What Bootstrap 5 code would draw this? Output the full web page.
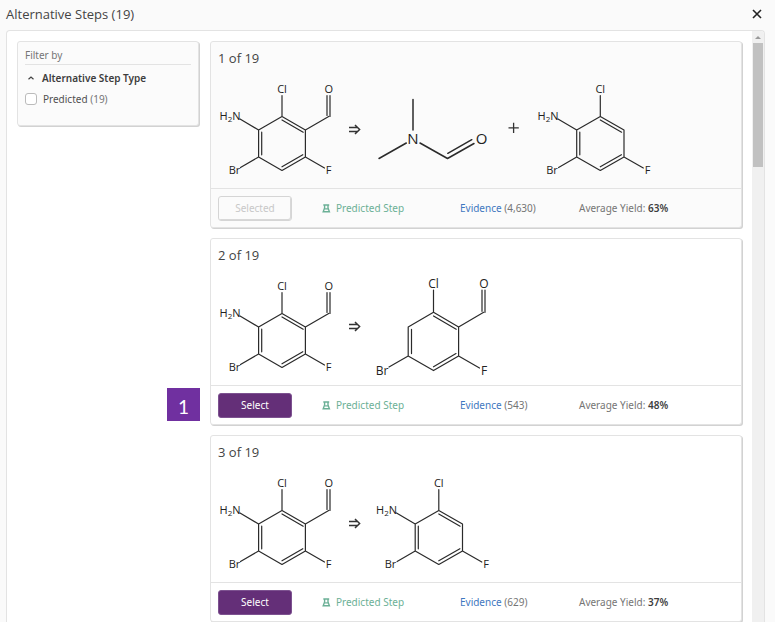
<!DOCTYPE html>
<html lang="en">
<head>
<meta charset="utf-8">
<meta name="viewport" content="width=device-width, initial-scale=1">
<title>Alternative Steps</title>
<link href="https://cdn.jsdelivr.net/npm/bootstrap@5.3.0/dist/css/bootstrap.min.css" rel="stylesheet">
<style>
  body { font-family: "Noto Sans", "Open Sans", sans-serif; font-size: 10px; line-height: 16px; color: #757575; background: #fafafa; }
  .dialog-head { height: 30px; padding: 0 12px 2px 6px; }
  .dialog-title { font-family: "Open Sans", sans-serif; font-size: 13px; line-height: 20px; color: #444; }
  .close-btn { width: 12px; height: 12px; line-height: 0; }
  .panel { margin: 0 10px 0 6px; border: 1px solid #e3e3e3; border-bottom: 0; border-radius: 4px 4px 0 0; background: #fff; min-height: 0; }
  .panel-body { padding: 10px 10px 0; gap: 11px; min-width: 0; }
  .box { border: 1px solid #e3e3e3; border-radius: 3px; box-shadow: 1px 1px 0 #d2d2d2; background: #fff; }
  .box-tint { background: #fbfbfb; }
  .filter { width: 182px; height: 85px; padding: 5px 7px; }
  .filter-label { border-bottom: 1px solid #e3e3e3; padding-bottom: 1px; }
  .filter-group { gap: 7px; padding: 5px 2px; color: #3d3d3d; }
  .filter .form-check-input { width: 12px; height: 12px; border-color: #bbb; border-radius: 3px; }
  .filter-option { gap: 6px; }
  .filter-option label { color: #505050; }
  .filter-option small { font-size: 10px; color: #757575; }
  .steps { gap: 10px; min-width: 0; }
  .step-title { font-family: "Open Sans", sans-serif; font-size: 13px; line-height: 32px; color: #444; padding: 0 7px; }
  .reaction { padding: 8px 7px 10px; }
  .reaction svg { flex: none; overflow: visible; }
  .step-foot { display: grid; grid-template-columns: 104fr 138fr 119fr 155fr; align-items: center; height: 39px; padding: 0 7px; border-top: 1px solid #e3e3e3; }
  .step-btn { width: 74px; height: 25px; padding: 0; font-size: 10px; line-height: 16px; border-radius: 3px; }
  .step-btn.pick { color: #fff; background: #642f78; border: 1px solid #7d5290; }
  .step-btn.picked, .step-btn.picked:disabled { color: #c8c8c8; background: #fbfbfb; border: 1px solid #d5d5d5; box-shadow: inset -1px -1px 0 #d8d8d8; opacity: 1; }
  .predicted { color: #6bb096; gap: 5px; }
  .evidence { color: #3f78c0; }
  .yield { color: #3d3d3d; font-weight: 600; }
  .callout-no { left: -44px; top: 149px; width: 33px; height: 33px; background: #7030a0; color: #fff; font: 19px/37px Lato, sans-serif; }
  .scroll-track { width: 12px; background: #f0f0f0; }
  .scroll-up { height: 12px; }
  .scroll-thumb { height: 124px; margin: 0 1px; background: #c1c1c1; }
  .bonds { fill: none; stroke: #2b2b2b; stroke-width: 1.2; stroke-linecap: round; stroke-linejoin: round; }
  .bonds-lg { stroke-width: 1.5; }
  .atoms { fill: #222; font-family: "Open Sans", sans-serif; font-size: 11px; }
  .atoms-md { font-size: 12px; }
  .atoms-lg { font-size: 15px; }
  .sub { font-size: 8px; }
</style>
<script src="https://cdn.jsdelivr.net/npm/bootstrap@5.3.0/dist/js/bootstrap.bundle.min.js"></script>
</head>
<body class="vh-100 d-flex flex-column overflow-hidden">

<svg class="d-none" aria-hidden="true">
  <defs>
    <g id="aldehyde">
      <path class="bonds" d="M282 116.5 305.4 130V157L282 170.5 258.6 157V130ZM282 120 303.2 132.2M302.8 154.7 282 166.8M261.7 132.2V154.8M282 116.5V95.5M305.4 130 328.7 116.5M330 116.5V95.5M327 115.5V95.5M305.4 157 324.5 168M258.6 157 240.5 167.5M258.6 130 240 119"/>
      <g class="atoms">
        <text x="282" y="93" text-anchor="middle">Cl</text>
        <text x="328.7" y="93" text-anchor="middle">O</text>
        <text x="219.5" y="120">H<tspan class="sub" dy="2">2</tspan><tspan dy="-2">N</tspan></text>
        <text x="234.5" y="174" text-anchor="middle">Br</text>
        <text x="328.5" y="174" text-anchor="middle">F</text>
      </g>
    </g>
    <g id="aniline">
      <path class="bonds" d="M600.3 116.5 624 130V157L600.3 170.5 576.7 157V130ZM600.3 120 621.6 132.2M621.4 154.7 600.3 166.8M579.8 132.2V154.8M600.3 116.5V95.5M624 157 643.3 168M576.7 157 558.6 167.5M576.7 130 558 119"/>
      <g class="atoms">
        <text x="600.3" y="93" text-anchor="middle">Cl</text>
        <text x="537.5" y="120">H<tspan class="sub" dy="2">2</tspan><tspan dy="-2">N</tspan></text>
        <text x="552" y="174" text-anchor="middle">Br</text>
        <text x="647.5" y="174" text-anchor="middle">F</text>
      </g>
    </g>
    <path id="yields" d="M349 127.5H357.5M349 131.5H357.5M355 125 359.6 129.5 355 134" fill="none" stroke="#333" stroke-width="1.5"/>
    <g id="flask" fill="none" stroke="#6bb096">
      <path d="M1.3 1H7.2M2.6 1.4V4L1.2 7.8H7.4L6 4V1.4" stroke-width="1.4"/>
      <path d="M2.4 4.9H6.2" stroke-width="1.2"/>
    </g>
  </defs>
</svg>

<header class="dialog-head d-flex align-items-center justify-content-between flex-shrink-0">
  <h1 class="dialog-title fw-normal m-0">Alternative Steps (19)</h1>
  <button type="button" class="close-btn btn border-0 p-0" aria-label="Close">
    <svg width="12" height="12" viewBox="0 0 12 12"><path d="M2 2 10 10M10 2 2 10" stroke="#222" stroke-width="1.6" fill="none"/></svg>
  </button>
</header>

<main class="panel d-flex flex-grow-1 overflow-hidden">
  <div class="panel-body d-flex align-items-start flex-grow-1">
    <aside class="filter box box-tint flex-shrink-0">
      <div class="filter-label">Filter by</div>
      <div class="filter-group d-flex align-items-center fw-semibold">
        <svg width="8" height="8" viewBox="0 0 8 8"><path d="M1.5 5.3 4 3 6.5 5.3" stroke="#444" stroke-width="1.2" fill="none"/></svg>
        <span>Alternative Step Type</span>
      </div>
      <div class="filter-option d-flex align-items-center">
        <input class="form-check-input m-0" type="checkbox" id="f-predicted">
        <label for="f-predicted">Predicted <small>(19)</small></label>
      </div>
    </aside>

    <div class="steps d-flex flex-column flex-grow-1">
      <section class="box box-tint">
        <h2 class="step-title fw-normal m-0">1 of 19</h2>
        <div class="reaction d-flex">
          <svg width="120" height="96" viewBox="218 82 120 96"><use href="#aldehyde"/></svg>
          <svg width="34" height="96" viewBox="338 82 34 96"><use href="#yields"/></svg>
          <svg width="128" height="96" viewBox="372 82 128 96">
            <path class="bonds bonds-lg" d="M413 99.5V130M379 158.5 406.3 143M420 143 447.5 158.5 474 143.5M447.8 153.3 471.8 139.7"/>
            <g class="atoms atoms-lg"><text x="413" y="144.3" text-anchor="middle">N</text><text x="481.7" y="144.3" text-anchor="middle">O</text></g>
          </svg>
          <svg width="28" height="96" viewBox="500 82 28 96"><path d="M508.5 127.8H518.8M513.6 122.7V133" stroke="#333" stroke-width="1.3"/></svg>
          <svg width="128" height="96" viewBox="528 82 128 96"><use href="#aniline"/></svg>
        </div>
        <div class="step-foot">
          <div><button type="button" class="step-btn picked btn" disabled>Selected</button></div>
          <div class="predicted d-flex align-items-center"><svg width="9" height="9" viewBox="0 0 9 9"><use href="#flask"/></svg>Predicted Step</div>
          <div><a href="#" class="evidence text-decoration-none">Evidence</a> (4,630)</div>
          <div>Average Yield: <span class="yield">63%</span></div>
        </div>
      </section>

      <section class="box position-relative">
        <div class="callout-no position-absolute text-center">1</div>
        <h2 class="step-title fw-normal m-0">2 of 19</h2>
        <div class="reaction d-flex">
          <svg width="120" height="96" viewBox="218 82 120 96"><use href="#aldehyde"/></svg>
          <svg width="34" height="96" viewBox="338 82 34 96"><use href="#yields"/></svg>
          <svg width="128" height="96" viewBox="372 279 128 96">
            <path class="bonds" d="M433.5 312.3 458.6 327V356L433.5 370.6 408.2 356V327ZM433.5 316 456.2 329.3M456 353.6 433.5 366.8M411.5 329.3V353.6M433.5 312.3V290M458.6 327 483.7 312.3M485 312.3V290M482 311.3V290M458.6 356 479.5 368M408.2 356 389 367"/>
            <g class="atoms atoms-md">
              <text x="433.5" y="287.5" text-anchor="middle">Cl</text>
              <text x="483.8" y="287.5" text-anchor="middle">O</text>
              <text x="382" y="375" text-anchor="middle">Br</text>
              <text x="484" y="375" text-anchor="middle">F</text>
            </g>
          </svg>
        </div>
        <div class="step-foot">
          <div><button type="button" class="step-btn pick btn">Select</button></div>
          <div class="predicted d-flex align-items-center"><svg width="9" height="9" viewBox="0 0 9 9"><use href="#flask"/></svg>Predicted Step</div>
          <div><a href="#" class="evidence text-decoration-none">Evidence</a> (543)</div>
          <div>Average Yield: <span class="yield">48%</span></div>
        </div>
      </section>

      <section class="box">
        <h2 class="step-title fw-normal m-0">3 of 19</h2>
        <div class="reaction d-flex">
          <svg width="120" height="96" viewBox="218 82 120 96"><use href="#aldehyde"/></svg>
          <svg width="34" height="96" viewBox="338 82 34 96"><use href="#yields"/></svg>
          <svg width="128" height="96" viewBox="533.5 82 128 96"><use href="#aniline"/></svg>
        </div>
        <div class="step-foot">
          <div><button type="button" class="step-btn pick btn">Select</button></div>
          <div class="predicted d-flex align-items-center"><svg width="9" height="9" viewBox="0 0 9 9"><use href="#flask"/></svg>Predicted Step</div>
          <div><a href="#" class="evidence text-decoration-none">Evidence</a> (629)</div>
          <div>Average Yield: <span class="yield">37%</span></div>
        </div>
      </section>
    </div>
  </div>
  <div class="scroll-track flex-shrink-0" aria-hidden="true">
    <div class="scroll-up d-flex align-items-center justify-content-center"><svg width="6" height="4" viewBox="0 0 6 4"><path d="M0 4 3 1 6 4Z" fill="#999"/></svg></div>
    <div class="scroll-thumb"></div>
  </div>
</main>
</body>
</html>
